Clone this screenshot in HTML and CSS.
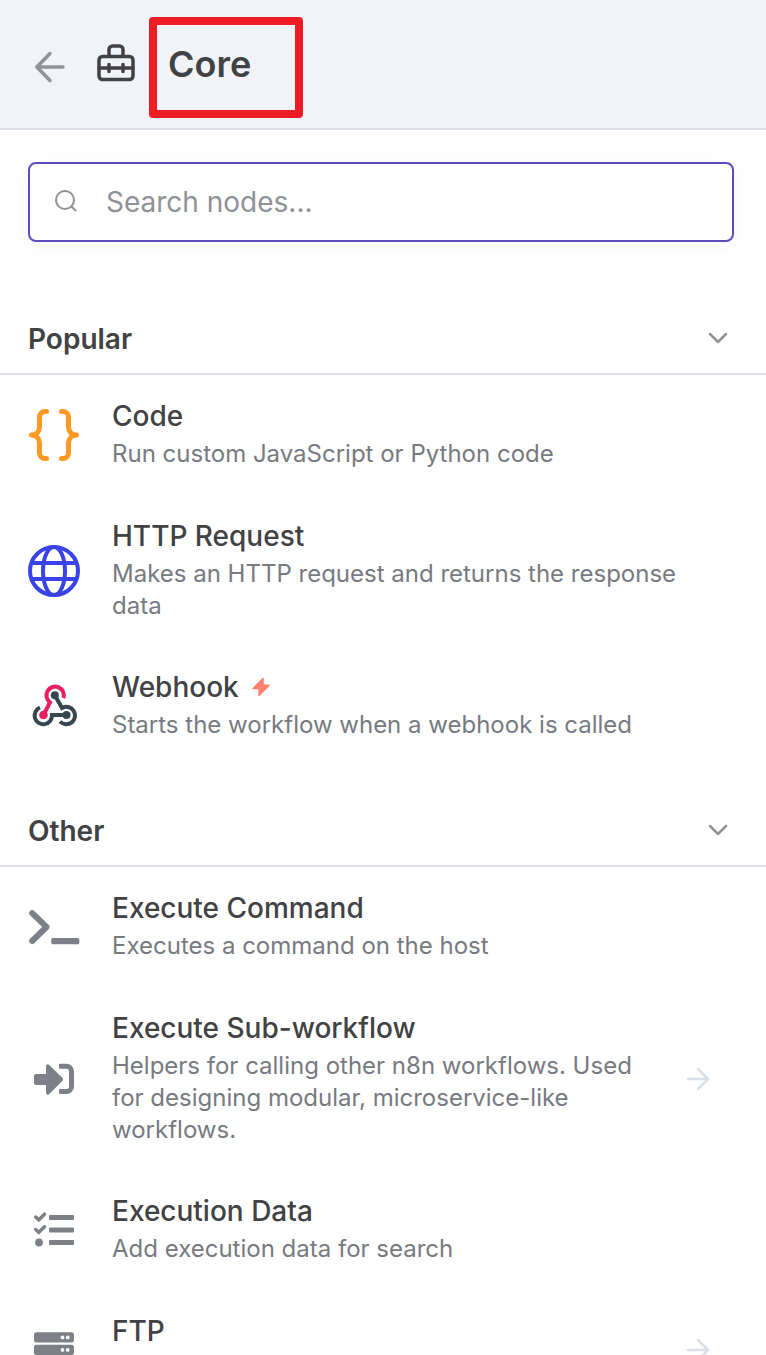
FILE: index.html
```html
<!DOCTYPE html>
<html lang="en">
<head>
    <meta charset="UTF-8">
    <meta name="viewport" content="width=device-width, initial-scale=1.0">
    <title>Core nodes</title>
    <link rel="stylesheet" href="styles.css">
</head>
<body>

<div class="panel">
    <header class="header">
        <button type="button" class="back" aria-label="Back">
            <svg width="32" height="32" viewBox="0 0 32 32" fill="none" stroke="currentColor" stroke-width="3.500" stroke-linecap="round" stroke-linejoin="round">
                <path d="M29 16H3M16 2.500L2.800 16L16 29.500"/>
            </svg>
        </button>
        <svg class="toolbox" width="40" height="40" viewBox="0 0 40 40" fill="none" stroke="currentColor" stroke-width="3.500" stroke-linecap="round" stroke-linejoin="round">
            <rect x="3" y="12.500" width="34" height="23" rx="3.500"/>
            <path d="M13 12V5.500a3.500 3.500 0 0 1 3.500-3.500h7a3.500 3.500 0 0 1 3.500 3.500V12M3 24H37M13 20.500v7M27 20.500v7"/>
        </svg>
        <h1 class="title">Core</h1>
    </header>

    <!-- Search -->
    <div class="search">
        <label class="search-box">
            <svg width="24" height="24" viewBox="0 0 24 24" fill="none" stroke="currentColor" stroke-width="2" stroke-linecap="round">
                <circle cx="11" cy="10" r="9"/>
                <path d="M17.500 16.500L21.500 20.500"/>
            </svg>
            <input type="text" name="search" placeholder="Search nodes..." aria-label="Search nodes">
        </label>
    </div>

    <!-- Popular -->
    <section>
        <h2 class="category">
            <button type="button">
                Popular
                <svg width="24" height="24" viewBox="0 0 24 24" fill="none" stroke="currentColor" stroke-width="2.500" stroke-linecap="round" stroke-linejoin="round"><path d="M4 7L12 15L20 7"/></svg>
            </button>
        </h2>
        <ul class="nodes">
            <li>
                <a href="#code" class="node">
                    <svg class="icon" viewBox="0 0 52 52" fill="none" stroke="#ff9922" stroke-width="5" stroke-linecap="round" stroke-linejoin="round">
                        <path d="M18.500 2.500H17a5.500 5.500 0 0 0-5.500 5.500v9.500c0 5-3 8.500-8 8.500c5 0 8 3.500 8 8.500v9.500a5.500 5.500 0 0 0 5.500 5.500h1.500"/>
                        <path d="M33.500 2.500H35a5.500 5.500 0 0 1 5.500 5.500v9.500c0 5 3 8.500 8 8.500c-5 0-8 3.500-8 8.500v9.500a5.500 5.500 0 0 1-5.500 5.500h-1.500"/>
                    </svg>
                    <div class="info">
                        <h3>Code</h3>
                        <p>Run custom JavaScript or Python code</p>
                    </div>
                </a>
            </li>
            <li>
                <a href="#http" class="node">
                    <svg class="icon" viewBox="0 0 52 52" fill="none" stroke="#3a42e9" stroke-width="4">
                        <circle cx="26" cy="26" r="24"/>
                        <ellipse cx="26" cy="26" rx="11" ry="24"/>
                        <path d="M3.500 18H48.500M3.500 34H48.500"/>
                    </svg>
                    <div class="info">
                        <h3>HTTP Request</h3>
                        <p>Makes an HTTP request and returns the response data</p>
                    </div>
                </a>
            </li>
            <li>
                <a href="#webhook" class="node">
                    <svg class="icon" viewBox="0 0 52 52" fill="none" stroke-width="4">
                        <g stroke="#37474f">
                            <path d="M26.800 15.200L34 28A8.700 8.700 0 1 1 32 41.500"/>
                            <path d="M12 27.500A8.700 8.700 0 1 0 24 35H38.500"/>
                        </g>
                        <path stroke="#e91e63" d="M35.400 18A8.700 8.700 0 1 0 22 22.300L15.500 35"/>
                        <circle cx="26.800" cy="15.200" r="4" fill="#37474f"/>
                        <circle cx="38.500" cy="35" r="4" fill="#37474f"/>
                        <circle cx="15.500" cy="35" r="4.300" fill="#e91e63"/>
                    </svg>
                    <div class="info">
                        <h3>Webhook
                            <svg class="bolt" width="20" height="20" viewBox="-1 0 20 20" fill="currentColor" stroke="currentColor" stroke-width="1.500" stroke-linejoin="round"><path d="M11 1.500L1.200 11.500H7.200L7 18.500L17 8.200H11Z"/></svg>
                        </h3>
                        <p>Starts the workflow when a webhook is called</p>
                    </div>
                </a>
            </li>
        </ul>
    </section>

    <!-- Other -->
    <section>
        <h2 class="category">
            <button type="button">
                Other
                <svg width="24" height="24" viewBox="0 0 24 24" fill="none" stroke="currentColor" stroke-width="2.500" stroke-linecap="round" stroke-linejoin="round"><path d="M4 7L12 15L20 7"/></svg>
            </button>
        </h2>
        <ul class="nodes">
            <li>
                <a href="#execute-command" class="node">
                    <svg class="icon" viewBox="0 0 52 52">
                        <path d="M4.200 12.200L18.500 26L4.200 40" fill="none" stroke="currentColor" stroke-width="6" stroke-linecap="round" stroke-linejoin="round"/>
                        <rect x="23.300" y="37" width="28" height="6.300" rx="1.500" fill="currentColor"/>
                    </svg>
                    <div class="info">
                        <h3>Execute Command</h3>
                        <p>Executes a command on the host</p>
                    </div>
                </a>
            </li>
            <li>
                <a href="#sub-workflow" class="node">
                    <svg class="icon" viewBox="0 0 52 52" fill="currentColor">
                        <path d="M8 21H18V13a1.800 1.800 0 0 1 3-1.300L34.500 25a2 2 0 0 1 0 2.800L21 41.200a1.800 1.800 0 0 1-3-1.300V32H8a2 2 0 0 1-2-2V23a2 2 0 0 1 2-2Z"/>
                        <path d="M32 10.800h6.500a7.500 7.500 0 0 1 7.500 7.500v15.200a7.500 7.500 0 0 1-7.500 7.500H32a1 1 0 0 1-1-1v-3a1 1 0 0 1 1-1h6.500a2.500 2.500 0 0 0 2.500-2.500V18.300a2.500 2.500 0 0 0-2.500-2.500H32a1 1 0 0 1-1-1v-3a1 1 0 0 1 1-1Z"/>
                    </svg>
                    <div class="info">
                        <h3>Execute Sub-workflow</h3>
                        <p>Helpers for calling other n8n workflows. Used for designing modular, microservice-like workflows.</p>
                    </div>
                    <svg class="arrow" width="24" height="24" viewBox="0 0 24 24" fill="none" stroke="currentColor" stroke-width="2.500" stroke-linecap="round" stroke-linejoin="round"><path d="M2 12H22M12 2L22 12L12 22"/></svg>
                </a>
            </li>
            <li>
                <a href="#execution-data" class="node">
                    <svg class="icon" viewBox="0 0 52 52" fill="currentColor">
                        <rect x="21" y="11" width="25" height="5" rx="1"/>
                        <rect x="21" y="23.500" width="25" height="5" rx="1"/>
                        <rect x="21" y="36" width="25" height="5" rx="1"/>
                        <circle cx="11" cy="38.500" r="3.900"/>
                        <path d="M7.700 13L10.800 15.800L16.500 10.200M7.700 25.500L10.800 28.300L16.500 22.700" fill="none" stroke="currentColor" stroke-width="3.500" stroke-linecap="round"/>
                    </svg>
                    <div class="info">
                        <h3>Execution Data</h3>
                        <p>Add execution data for search</p>
                    </div>
                </a>
            </li>
            <li>
                <a href="#ftp" class="node">
                    <svg class="icon" viewBox="0 0 52 52" fill="currentColor">
                        <rect x="6" y="8.300" width="40" height="10.200" rx="2.500"/>
                        <rect x="6" y="20.800" width="40" height="10.200" rx="2.500"/>
                        <rect x="6" y="33.300" width="40" height="10.200" rx="2.500"/>
                        <g fill="#fff">
                            <circle cx="34.500" cy="13.400" r="1.900"/>
                            <circle cx="39.700" cy="13.400" r="1.900"/>
                            <circle cx="34.500" cy="25.900" r="1.900"/>
                            <circle cx="39.700" cy="25.900" r="1.900"/>
                            <circle cx="34.500" cy="38.400" r="1.900"/>
                            <circle cx="39.700" cy="38.400" r="1.900"/>
                        </g>
                    </svg>
                    <div class="info">
                        <h3>FTP</h3>
                    </div>
                    <svg class="arrow" width="24" height="24" viewBox="0 0 24 24" fill="none" stroke="currentColor" stroke-width="2.500" stroke-linecap="round" stroke-linejoin="round"><path d="M2 12H22M12 2L22 12L12 22"/></svg>
                </a>
            </li>
        </ul>
    </section>
</div>

</body>
</html>
```
FILE: styles.css
```css
* {
    box-sizing: border-box;
}
body {
    font-family: Inter, "Liberation Sans", sans-serif;
    background-color: #fff;
    color: #414244;
    margin: 0;
}
h1, h2, h3, p, ul {
    margin: 0;
    padding: 0;
}
button {
    font: inherit;
    color: inherit;
    background: none;
    border: none;
    padding: 0;
    cursor: pointer;
}
svg {
    display: block;
    flex-shrink: 0;
}
.panel {
    height: 100vh;
    overflow: hidden;
}
.header {
    display: flex;
    align-items: center;
    height: 130px;
    padding: 0 34px;
    background-color: #f1f3f9;
    border-bottom: 2px solid #dbdfe7;
}
.back {
    color: #909298;
    margin-right: 30px;
    padding-top: 6px;
}
.toolbox {
    margin-right: 32px;
}
.title {
    position: relative;
    font-size: 36px;
    font-weight: 600;
    line-height: 44px;
}
/* red frame around the title */
.title::after {
    content: '';
    box-sizing: border-box;
    position: absolute;
    top: -25px;
    left: -19px;
    width: 154px;
    height: 101px;
    border: 8px solid #ee1c25;
    border-radius: 4px;
}
.search {
    padding: 32px 32px 32px 28px;
}
.search-box {
    display: flex;
    align-items: center;
    gap: 28px;
    height: 80px;
    padding: 0 24px;
    color: #909298;
    border: 2px solid #5d4cc0;
    border-radius: 8px;
    box-shadow: 0 4px 20px rgba(0, 0, 0, 0.04);
}
.search-box input {
    flex: 1;
    min-width: 0;
    padding: 0;
    font-family: inherit;
    font-size: 28px;
    color: #414244;
    background: none;
    border: none;
    outline: none;
}
.search-box input::placeholder {
    color: #909298;
    opacity: 1;
}
.category {
    font-size: 28px;
    font-weight: 600;
    line-height: 36px;
    border-bottom: 2px solid #dbdfe7;
}
.category button {
    display: flex;
    align-items: center;
    justify-content: space-between;
    width: 100%;
    padding: 47px 36px 16px 28px;
    text-align: left;
}
.category svg {
    color: #909298;
}
.nodes {
    list-style: none;
}
.node {
    display: flex;
    align-items: center;
    min-height: 120px;
    padding: 24px 56px 24px 28px;
    color: #7d8087;
    text-decoration: none;
}
.icon {
    width: 52px;
    height: 52px;
    margin-right: 32px;
}
.info {
    flex: 1;
    align-self: flex-start;
}
.info h3 {
    display: flex;
    align-items: center;
    gap: 12px;
    margin-bottom: 5px;
    font-size: 28px;
    font-weight: 500;
    line-height: 34px;
    color: #414244;
}
.info p {
    font-size: 24px;
    line-height: 32px;
    color: #777a81;
}
.bolt {
    color: #ff7f6e;
}
.arrow {
    margin-left: 24px;
    color: #dbdfe7;
}
```
